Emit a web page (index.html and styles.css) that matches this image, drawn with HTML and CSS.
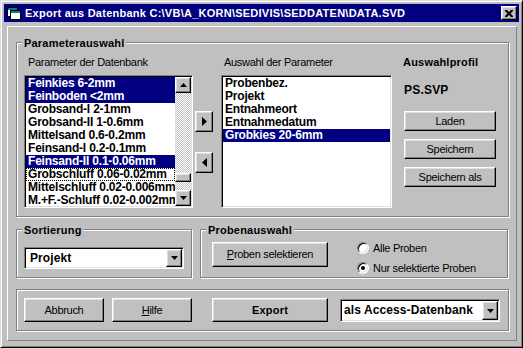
FILE: index.html
```html
<!DOCTYPE html>
<html lang="de">
<head>
<meta charset="utf-8">
<title>Export aus Datenbank</title>
<link rel="stylesheet" href="styles.css">
</head>
<body>
<div class="window">
  <div class="titlebar">
    <svg class="app-icon" width="14" height="13" viewBox="0 0 14 13">
      <rect x="0.5" y="0.5" width="10" height="9" fill="#fff" stroke="#000"/>
      <rect x="3.5" y="3.5" width="10" height="9" fill="#fff" stroke="#000"/>
      <rect x="4" y="4" width="9" height="2" fill="#008080"/>
      <rect x="1" y="1" width="9" height="2" fill="#008080"/>
    </svg>
    <span class="title">Export aus Datenbank C:\VB\A_KORN\SEDIVIS\SEDDATEN\DATA.SVD</span>
    <div class="close-btn raised">
      <svg width="8" height="7" viewBox="0 0 8 7"><path d="M0 0h2l2 2 2-2h2v1l-2.5 2.5L8 6v1H6L4 5 2 7H0V6l2.5-2.5L0 1z" fill="#000"/></svg>
    </div>
  </div>

  <div class="panel">
    <div class="group group-params">
      <span class="legend">Parameterauswahl</span>

      <div class="col col-db">
        <div class="label">Parameter der Datenbank</div>
        <div class="listbox listbox-db">
          <div class="items">
            <div class="item selected">Feinkies 6-2mm</div>
            <div class="item selected">Feinboden &lt;2mm</div>
            <div class="item">Grobsand-I 2-1mm</div>
            <div class="item">Grobsand-II 1-0.6mm</div>
            <div class="item">Mittelsand 0.6-0.2mm</div>
            <div class="item">Feinsand-I 0.2-0.1mm</div>
            <div class="item selected">Feinsand-II 0.1-0.06mm</div>
            <div class="item focused">Grobschluff 0.06-0.02mm</div>
            <div class="item">Mittelschluff 0.02-0.006mm</div>
            <div class="item">M.+F.-Schluff 0.02-0.002mm</div>
          </div>
          <div class="vscroll">
            <div class="sb-btn raised">
              <svg width="7" height="4" viewBox="0 0 7 4"><path d="M3.5 0L7 4H0z" fill="#000"/></svg>
            </div>
            <div class="sb-track">
              <div class="sb-thumb raised"></div>
            </div>
            <div class="sb-btn raised">
              <svg width="7" height="4" viewBox="0 0 7 4"><path d="M0 0h7L3.5 4z" fill="#000"/></svg>
            </div>
          </div>
        </div>
      </div>

      <div class="col col-arrows">
        <div class="arrow-btn raised">
          <svg width="5" height="9" viewBox="0 0 5 9"><path d="M0 0l5 4.5L0 9z" fill="#000"/></svg>
        </div>
        <div class="arrow-btn raised">
          <svg width="5" height="9" viewBox="0 0 5 9"><path d="M5 0v9L0 4.5z" fill="#000"/></svg>
        </div>
      </div>

      <div class="col col-sel">
        <div class="label label-sel">Auswahl der Parameter</div>
        <div class="listbox listbox-sel">
          <div class="items">
            <div class="item">Probenbez.</div>
            <div class="item">Projekt</div>
            <div class="item">Entnahmeort</div>
            <div class="item">Entnahmedatum</div>
            <div class="item selected">Grobkies 20-6mm</div>
          </div>
        </div>
      </div>

      <div class="col col-profile">
        <div class="profile-title">Auswahlprofil</div>
        <div class="profile-name">PS.SVP</div>
        <div class="profile-buttons">
          <div class="btn raised profile-btn">Laden</div>
          <div class="btn raised profile-btn">Speichern</div>
          <div class="btn raised profile-btn">Speichern als</div>
        </div>
      </div>
    </div>

    <div class="row-mid">
      <div class="group group-sort">
        <span class="legend">Sortierung</span>
        <div class="combo combo-sort">
          <div class="combo-text">Projekt</div>
          <div class="combo-btn raised">
            <svg width="7" height="4" viewBox="0 0 7 4"><path d="M0 0h7L3.5 4z" fill="#000"/></svg>
          </div>
        </div>
      </div>
      <div class="group group-proben">
        <span class="legend">Probenauswahl</span>
        <div class="btn raised btn-select"><u>P</u>roben selektieren</div>
        <div class="radios">
          <div class="radio-row"><span class="radio"></span><span class="radio-label">Alle Proben</span></div>
          <div class="radio-row"><span class="radio checked"></span><span class="radio-label">Nur selektierte Proben</span></div>
        </div>
      </div>
    </div>

    <div class="group group-actions">
      <div class="btn raised btn-action">Abbruch</div>
      <div class="btn raised btn-action btn-help"><u>H</u>ilfe</div>
      <div class="btn raised btn-export">Export</div>
      <div class="combo combo-format">
        <div class="combo-text">als Access-Datenbank</div>
        <div class="combo-btn raised">
          <svg width="7" height="4" viewBox="0 0 7 4"><path d="M0 0h7L3.5 4z" fill="#000"/></svg>
        </div>
      </div>
    </div>
  </div>
</div>
</body>
</html>
```

FILE: styles.css
```css
* { box-sizing: border-box; margin: 0; padding: 0; }
html, body { width: 523px; height: 348px; overflow: hidden; }
body {
  background: #c0c0c0;
  font-family: "Liberation Sans", Arial, sans-serif;
  font-size: 11px;
  line-height: 13px;
  color: #000;
}

.window {
  width: 523px;
  height: 348px;
  background: #c0c0c0;
  border: 1px solid;
  border-color: #dfdfdf #000 #000 #dfdfdf;
  box-shadow: inset 1px 1px 0 #fff, inset -1px -1px 0 #808080;
  padding: 3px;
  display: flex;
  flex-direction: column;
}

.raised {
  background: #c0c0c0;
  border: 1px solid;
  border-color: #fff #000 #000 #fff;
  box-shadow: inset -1px -1px 0 #808080, inset 1px 1px 0 #dfdfdf;
}

/* Title bar */
.titlebar {
  height: 18px;
  background: #000080;
  display: flex;
  align-items: center;
  padding-left: 3px;
  flex: none;
}
.app-icon { flex: none; margin-right: 4px; }
.title {
  color: #fff;
  font-weight: bold;
  font-size: 11px;
  letter-spacing: 0.25px;
  white-space: nowrap;
}
.close-btn {
  margin-left: auto;
  margin-right: 2px;
  width: 16px;
  height: 14px;
  display: flex;
  align-items: center;
  justify-content: center;
}

/* Panel */
.panel {
  flex: 1;
  margin: 4px 2px 3px 3px;
  border: 1px solid;
  border-color: #fff #808080 #808080 #fff;
  padding: 15px 7px 0 8px;
  display: flex;
  flex-direction: column;
}

.group {
  position: relative;
  border: 1px solid #808080;
  box-shadow: inset 1px 1px 0 #fff, 1px 1px 0 #fff;
}
.legend {
  position: absolute;
  top: -6px;
  left: 5px;
  padding: 0 2px;
  background: #c0c0c0;
  font-weight: bold;
  letter-spacing: 0.2px;
  white-space: nowrap;
}

/* Parameter group */
.group-params {
  height: 175px;
  display: flex;
  padding: 13px 0 0 7px;
}
.col { display: flex; flex-direction: column; }
.col-db { width: 169px; }
.label { height: 13px; padding-left: 4px; letter-spacing: -0.3px; white-space: nowrap; }
.label-sel { padding-left: 3px; }

.listbox {
  margin-top: 6px;
  height: 133px;
  background: #fff;
  border: 1px solid;
  border-color: #808080 #fff #fff #808080;
  box-shadow: inset 1px 1px 0 #000, inset -1px -1px 0 #dfdfdf;
  padding: 1px;
  display: flex;
}
.items { flex: 1; overflow: hidden; min-width: 0; }
.item {
  height: 13px;
  line-height: 13px;
  padding-left: 2px;
  font-size: 12px;
  font-weight: bold;
  letter-spacing: -0.2px;
  white-space: nowrap;
  overflow: hidden;
}
.item.selected { background: #000080; color: #fff; }
.item.focused { outline: 1px dotted #000; outline-offset: -1px; }

.vscroll { width: 16px; flex: none; display: flex; flex-direction: column; }
.sb-btn {
  width: 16px; height: 16px; flex: none;
  display: flex; align-items: center; justify-content: center;
}
.sb-track {
  flex: 1;
  background: repeating-conic-gradient(#c0c0c0 0 25%, #fff 0 50%) 0 0 / 2px 2px;
}
.sb-thumb { width: 16px; height: 9px; margin-top: 80px; }

.col-arrows {
  width: 18px;
  margin-left: 2px;
  padding-top: 55px;
  gap: 20px;
}
.arrow-btn {
  width: 18px; height: 21px;
  display: flex; align-items: center; justify-content: center;
}

.col-sel { width: 171px; margin-left: 8px; }

.col-profile { margin-left: 11px; }
.profile-title { font-weight: bold; height: 13px; letter-spacing: 0.2px; }
.profile-name { font-weight: bold; font-size: 12px; margin-top: 15px; height: 13px; padding-left: 1px; letter-spacing: 0.2px; }
.profile-buttons {
  margin-top: 14px;
  margin-left: 1px;
  display: flex;
  flex-direction: column;
  gap: 8px;
}
.btn {
  display: flex;
  align-items: center;
  justify-content: center;
  letter-spacing: -0.3px;
  white-space: nowrap;
}
.profile-btn { width: 92px; height: 20px; }

/* Middle row */
.row-mid {
  display: flex;
  gap: 8px;
  margin-top: 12px;
}
.group-sort {
  width: 176px;
  height: 49px;
  padding: 17px 0 0 7px;
}
.combo {
  background: #fff;
  border: 1px solid;
  border-color: #808080 #fff #fff #808080;
  box-shadow: inset 1px 1px 0 #000, inset -1px -1px 0 #dfdfdf;
  padding: 1px;
  display: flex;
  align-items: stretch;
}
.combo-text {
  flex: 1;
  font-size: 12px;
  font-weight: bold;
  padding-left: 4px;
  display: flex;
  align-items: center;
  letter-spacing: 0.1px;
  white-space: nowrap;
}
.combo-btn {
  width: 16px; flex: none;
  display: flex; align-items: center; justify-content: center;
}
.combo-sort { width: 160px; height: 22px; }

.group-proben {
  width: 308px;
  height: 49px;
  display: flex;
  padding: 12px 0 0 11px;
}
.btn-select { width: 116px; height: 25px; }
.radios {
  margin-left: 29px;
  display: flex;
  flex-direction: column;
  gap: 8px;
}
.radio-row { display: flex; align-items: center; height: 12px; }
.radio {
  width: 12px; height: 12px;
  border-radius: 50%;
  background: #fff;
  border: 1px solid;
  border-color: #808080 #fff #fff #808080;
  box-shadow: inset 1px 1px 0 #000, inset -1px -1px 0 #dfdfdf;
  display: flex; align-items: center; justify-content: center;
  flex: none;
}
.radio.checked::after {
  content: "";
  width: 4px; height: 4px;
  border-radius: 50%;
  background: #000;
}
.radio-label { margin-left: 4px; letter-spacing: -0.3px; white-space: nowrap; }

/* Action group */
.group-actions {
  margin-top: 11px;
  height: 42px;
  display: flex;
  align-items: flex-start;
  padding: 8px 0 0 7px;
}
.btn-action { width: 80px; height: 24px; }
.btn-help { margin-left: 8px; }
.btn-export { width: 116px; height: 24px; margin-left: 20px; font-weight: bold; letter-spacing: 0.2px; }
.combo-format { width: 160px; height: 23px; margin-left: 12px; margin-top: 1px; }
.combo-format .combo-text { padding-left: 2px; }
```
